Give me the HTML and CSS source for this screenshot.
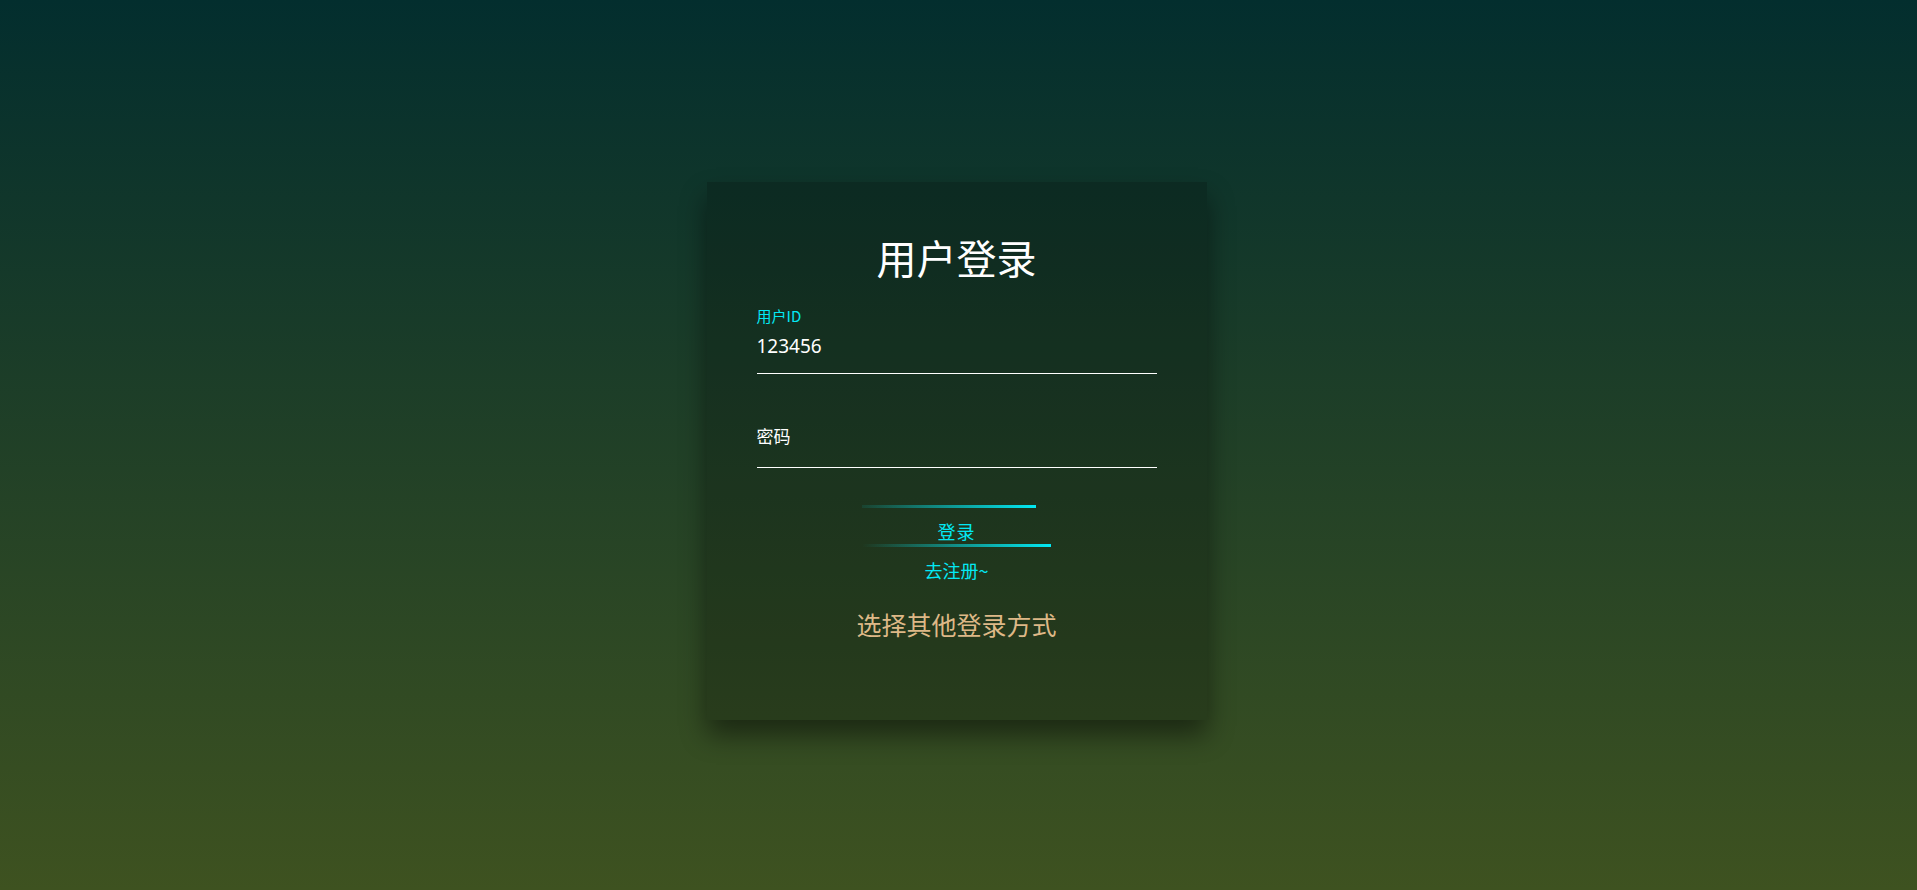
FILE: index.html
```
<!DOCTYPE html>
<html lang="zh-CN">
<head>
<meta charset="utf-8">
<title>用户登录</title>
<link rel="stylesheet" href="styles.css">
</head>
<body>
<div class="page">
  <div class="login-box">
    <h2 class="title">用户登录</h2>
    <form class="form">
      <div class="field">
        <label class="field-label">用户ID</label>
        <div class="field-input">123456</div>
      </div>
      <div class="field field-empty">
        <div class="field-input">密码</div>
      </div>
      <div class="actions">
        <a class="btn" href="#"><span class="bar bar-top"></span>登录<span class="bar bar-bottom"></span></a>
        <a class="register" href="#">去注册~</a>
        <div class="other">选择其他登录方式</div>
      </div>
    </form>
  </div>
</div>
</body>
</html>
```
FILE: styles.css
```
* { box-sizing: border-box; }
html, body { margin: 0; padding: 0; height: 100%; }
body {
  background: linear-gradient(to bottom, #032e2e 0%, #3e5220 100%);
  font-family: "Noto Sans", "Noto Sans CJK SC", sans-serif;
  color: #fff;
}
.page {
  height: 890px;
  display: flex;
  align-items: center;
  justify-content: center;
  padding-top: 12px;
  padding-right: 4px;
}
.login-box {
  width: 500px;
  padding: 51px 50px 77px;
  background: rgba(0, 0, 0, 0.2);
  box-shadow: 0 15px 25px rgba(0, 0, 0, 0.45);
}
.title {
  margin: 0;
  font-family: "Noto Sans CJK SC", sans-serif;
  font-weight: 400;
  font-size: 40px;
  line-height: 48px;
  text-align: center;
  color: #fff;
}
.form { margin: 25px 0 0; }
.field-label {
  display: block;
  font-family: "Noto Sans CJK SC", sans-serif;
  font-size: 15px;
  line-height: 20px;
  color: #03e9f4;
}
.field-input {
  padding: 7px 0 14px;
  font-size: 19px;
  line-height: 26px;
  color: #fff;
  border-bottom: 1px solid #fff;
}
.field-empty { margin-top: 30px; padding-top: 19px; }
.field-empty .field-input {
  font-family: "Noto Sans CJK SC", sans-serif;
  font-size: 17px;
  padding: 0 0 18px;
}
.actions {
  display: flex;
  flex-direction: column;
  align-items: center;
  margin-top: 37px;
}
.btn {
  position: relative;
  display: block;
  width: 189px;
  height: 42px;
  padding-top: 14px;
  overflow: hidden;
  font-family: "Noto Sans CJK SC", sans-serif;
  font-size: 18px;
  line-height: 24px;
  color: #03e9f4;
  text-align: center;
  text-decoration: none;
  letter-spacing: 1px;
}
.bar {
  position: absolute;
  display: block;
  height: 3px;
  width: 100%;
  background: linear-gradient(90deg, transparent, #03e9f4);
}
.bar-top { top: 0; left: -15px; }
.bar-bottom { bottom: 0; left: 0; }
.register {
  display: block;
  margin-top: 11px;
  font-family: "Noto Sans CJK SC", sans-serif;
  font-size: 18px;
  line-height: 24px;
  color: #03e9f4;
  text-decoration: none;
}
.other {
  margin-top: 25px;
  margin-bottom: 2px;
  font-family: "Noto Sans CJK SC", sans-serif;
  font-size: 25px;
  line-height: 34px;
  color: #deb887;
}
```
